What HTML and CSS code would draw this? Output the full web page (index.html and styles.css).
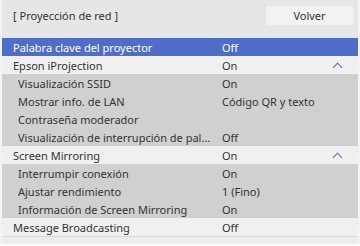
FILE: index.html
```html
<!DOCTYPE html>
<html lang="es">
<head>
    <meta charset="UTF-8">
    <title>Proyección de red</title>
    <link rel="stylesheet" href="styles.css">
</head>
<body>
    <div class="screen">
        <header class="top">
            <span class="title">[ Proyección de red ]</span>
            <button class="back">Volver</button>
        </header>
        <ul class="menu">
            <li class="row selected"><span class="name">Palabra clave del proyector</span><span class="value">Off</span></li>
            <li class="row"><span class="name">Epson iProjection</span><span class="value">On</span><span class="caret"></span></li>
            <li class="row sub"><span class="name">Visualización SSID</span><span class="value">On</span></li>
            <li class="row sub"><span class="name">Mostrar info. de LAN</span><span class="value">Código QR y texto</span></li>
            <li class="row sub"><span class="name">Contraseña moderador</span><span class="value"></span></li>
            <li class="row sub"><span class="name">Visualización de interrupción de pal...</span><span class="value">Off</span></li>
            <li class="row"><span class="name">Screen Mirroring</span><span class="value">On</span><span class="caret"></span></li>
            <li class="row sub"><span class="name">Interrumpir conexión</span><span class="value">On</span></li>
            <li class="row sub"><span class="name">Ajustar rendimiento</span><span class="value">1 (Fino)</span></li>
            <li class="row sub"><span class="name">Información de Screen Mirroring</span><span class="value">On</span></li>
            <li class="row"><span class="name">Message Broadcasting</span><span class="value">Off</span></li>
        </ul>
        <div class="foot"></div>
    </div>
</body>
</html>
```

FILE: styles.css
```css
* {
    padding: 0;
    margin: 0;
    box-sizing: border-box;
}

body {
    width: 360px;
    height: 246px;
    background: #fff;
    font-family: "Noto Sans", "Open Sans", sans-serif;
    font-size: 11px;
    color: #333;
}

.screen {
    width: 360px;
    height: 245px;
    border: 2px solid #f3f3f3;
    border-top: 0;
    background: #e6e6e6;
    display: flex;
    flex-direction: column;
}

.top {
    height: 38px;
    display: flex;
    align-items: flex-start;
    justify-content: space-between;
    padding: 6px 5px 0 11px;
}

.title {
    line-height: 20px;
}

.back {
    width: 87px;
    height: 19px;
    background: #f2f2f2;
    border: 0;
    font: inherit;
    color: #333;
}

.menu {
    list-style: none;
}

.row {
    height: 18px;
    display: grid;
    grid-template-columns: 209px 1fr 24px;
    align-items: center;
    padding-left: 11px;
    background: #f0f0f0;
}

.row.sub {
    background: #d0d0d0;
    padding-left: 16px;
}

.row.sub .name {
    width: 204px;
}

.row.sub {
    grid-template-columns: 204px 1fr 24px;
}

.row.selected {
    background: #4f6dcb;
    color: #fff;
}

.name {
    white-space: nowrap;
    overflow: hidden;
}

.caret {
    width: 7px;
    height: 7px;
    border-left: 1.5px solid #5a6cb8;
    border-top: 1.5px solid #5a6cb8;
    transform: rotate(45deg);
    margin-top: 4px;
}

.foot {
    flex: 1;
    background: #ececec;
    border-top: 1px solid #d8d8d8;
}
```
